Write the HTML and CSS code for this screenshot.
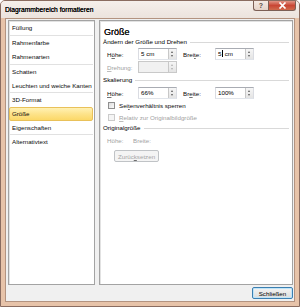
FILE: index.html
```html
<!DOCTYPE html>
<html lang="de">
<head>
<meta charset="utf-8">
<title>Diagrammbereich formatieren</title>
<link rel="stylesheet" href="styles.css">
</head>
<body>
<div class="window">
  <div class="titlebar">
    <span class="title">Diagrammbereich formatieren</span>
    <div class="caption">
      <div class="cbtn help">?</div>
      <div class="cbtn close"><svg width="9" height="7" viewBox="0 0 9 7"><path d="M1.5 0.5 L7.5 6.5 M7.5 0.5 L1.5 6.5" stroke="#fff" stroke-width="1.7" fill="none"/></svg></div>
    </div>
  </div>
  <div class="client">
    <div class="panes">
      <ul class="nav">
        <li class="item">Füllung</li>
        <li class="sep"></li>
        <li class="item">Rahmenfarbe</li>
        <li class="item">Rahmenarten</li>
        <li class="sep"></li>
        <li class="item">Schatten</li>
        <li class="item short">Leuchten und weiche Kanten</li>
        <li class="sep"></li>
        <li class="item">3D-Format</li>
        <li class="item selected">Größe</li>
        <li class="item short">Eigenschaften</li>
        <li class="sep"></li>
        <li class="item">Alternativtext</li>
      </ul>
      <div class="content">
        <h1 class="heading">Größe</h1>
        <div class="sec">Ändern der Größe und Drehen</div>
        <div class="row r1">
          <span class="lbl">H<u>ö</u>he:</span>
          <div class="field"><span class="val">5 cm</span><span class="spin"></span></div>
          <span class="lbl lbl2">Brei<u>t</u>e:</span>
          <div class="field"><span class="val">5<i class="caret"></i> cm</span><span class="spin"></span></div>
        </div>
        <div class="row r2 disabled">
          <span class="lbl"><u>D</u>rehung:</span>
          <div class="field off"><span class="val"></span><span class="spin"></span></div>
        </div>
        <div class="sec s2">Skalierung</div>
        <div class="row r3">
          <span class="lbl"><u>H</u>öhe:</span>
          <div class="field"><span class="val">66%</span><span class="spin"></span></div>
          <span class="lbl lbl2">Br<u>e</u>ite:</span>
          <div class="field"><span class="val">100%</span><span class="spin"></span></div>
        </div>
        <div class="check"><span class="box"></span><span>Sei<u>t</u>enverhältnis sperren</span></div>
        <div class="check disabled"><span class="box"></span><span><u>R</u>elativ zur Originalbildgröße</span></div>
        <div class="sec s3">Originalgröße</div>
        <div class="orig disabled">
          <span class="olbl">Höhe:</span>
          <span>Breite:</span>
        </div>
        <div class="btnrow"><span class="btn off">Zurüc<u>k</u>setzen</span></div>
      </div>
    </div>
    <div class="footer"><span class="btn primary">Schließen</span></div>
  </div>
</div>
</body>
</html>
```
FILE: styles.css
```css
html, body {
  margin: 0;
  padding: 0;
  background: #ffffff;
}
body {
  font-family: "Liberation Sans", Arial, sans-serif;
  font-size: 6.2px;
  color: #0a0a0a;
}
.window {
  width: 300px;
  height: 307px;
  box-sizing: border-box;
  border: 1px solid #8a6c60;
  border-radius: 5px 5px 0 0;
  background: #e7c3a9;
  display: flex;
  flex-direction: column;
  overflow: hidden;
}
.titlebar {
  height: 17px;
  flex: none;
  display: flex;
  justify-content: space-between;
  align-items: flex-start;
  background: linear-gradient(#f5efeb, #ece3dd);
}
.title {
  padding-left: 4px;
  line-height: 17px;
  font-size: 6.7px;
  color: #000;
  text-shadow: 0 0 0.3px #000;
}
.caption {
  display: flex;
  margin-top: -1px;
  margin-right: 3px;
}
.cbtn {
  height: 11px;
  box-sizing: border-box;
  border: 1px solid #7c5f55;
  border-top: none;
  display: flex;
  align-items: center;
  justify-content: center;
}
.help {
  width: 15px;
  border-right: none;
  border-radius: 0 0 0 3px;
  background: linear-gradient(#f6ece6, #e4d2c8);
  font-size: 7px;
  font-weight: bold;
  color: #5a4a44;
}
.close {
  width: 28px;
  border-radius: 0 0 3px 0;
  background: linear-gradient(#e6a697, #c94634 55%, #d06a4c);
}
.client {
  flex: 1;
  margin: 0 4px 4px 4px;
  border: 1px solid #b39380;
  background: #f0f0f0;
  display: flex;
  flex-direction: column;
}
.panes {
  height: 265px;
  margin-top: 1px;
  display: flex;
  gap: 4px;
  padding-left: 2px;
}
.nav {
  list-style: none;
  margin: 0;
  padding: 0;
  width: 87px;
  box-sizing: border-box;
  border: 1px solid #a3a3a3;
  box-shadow: inset 1px 1px 0 #e2e2e2;
  background: #fff;
}
.nav .item {
  height: 14px;
  line-height: 14px;
  padding-left: 3px;
  margin-right: 1px;
  white-space: nowrap;
}
.nav .item.short {
  height: 13px;
  line-height: 13px;
}
.nav .item.selected {
  box-sizing: border-box;
  border: 1px solid #e9c15a;
  border-radius: 2px;
  padding-left: 2px;
  line-height: 12px;
  background: linear-gradient(#fff1b4, #fde38a 50%, #fbd868);
}
.nav .sep {
  height: 1px;
  margin: 0 1px;
  background: #e1e1e1;
}
.content {
  width: 194px;
  box-sizing: border-box;
  border: 1px solid #a3a3a3;
  box-shadow: inset 1px 1px 0 #e2e2e2;
  background: #fff;
  padding: 5px 3px 0 3px;
  display: flex;
  flex-direction: column;
}
.heading {
  margin: 0;
  height: 12px;
  line-height: 12px;
  font-size: 9px;
  font-weight: normal;
  color: #111;
  padding-left: 1px;
  text-shadow: 0 0 0.3px #000;
}
.sec {
  height: 8px;
  line-height: 8px;
  display: flex;
  align-items: center;
  white-space: nowrap;
  color: #000;
}
.sec::after {
  content: "";
  flex: 1;
  margin-left: 3px;
  border-top: 1px solid #d9d9d9;
}
.s2 { margin-top: 3px; }
.s3 { margin-top: 1px; }
.row {
  height: 12px;
  display: flex;
  align-items: center;
  padding-left: 4px;
}
.r1 { margin-top: 2px; }
.r2 { margin-top: 1px; }
.r3 { margin-top: 3px; }
.lbl {
  width: 31px;
  flex: none;
}
.lbl2 {
  margin-left: 6px;
  width: 32px;
}
u {
  text-decoration: underline;
  text-decoration-color: rgba(0, 0, 0, 0.55);
  text-underline-offset: 0.5px;
}
.disabled {
  color: #a2a2a2;
}
.disabled u {
  text-decoration-color: #bdbdbd;
}
.field {
  width: 39px;
  height: 12px;
  box-sizing: border-box;
  border: 1px solid #b5b8bf;
  border-color: #a9acb3 #dadce2 #e0e4ea #dadce2;
  display: flex;
  background: #fff;
}
.field.off {
  background: #f1f1f1;
  border-color: #c9c9c9;
}
.val {
  flex: 1;
  padding-left: 2px;
  line-height: 10px;
  color: #000;
  white-space: nowrap;
}
.caret {
  display: inline-block;
  width: 1px;
  height: 7px;
  background: #000;
  vertical-align: -1px;
  margin-left: 0.5px;
}
.spin {
  width: 8px;
  flex: none;
  box-sizing: border-box;
  border-left: 1px solid #c8c8c8;
  background: linear-gradient(#f6f6f6, #e4e4e4);
  position: relative;
}
.spin::before,
.spin::after {
  content: "";
  position: absolute;
  left: 2px;
  border-left: 1.5px solid transparent;
  border-right: 1.5px solid transparent;
}
.spin::before {
  top: 2px;
  border-bottom: 2px solid #5a5a5a;
}
.spin::after {
  bottom: 2px;
  border-top: 2px solid #5a5a5a;
}
.field.off .spin::before { border-bottom-color: #b0b0b0; }
.field.off .spin::after { border-top-color: #b0b0b0; }
.check {
  height: 12px;
  display: flex;
  align-items: center;
  padding-left: 5px;
  white-space: nowrap;
}
.box {
  width: 7px;
  height: 7px;
  box-sizing: border-box;
  border: 1px solid #8f8f8f;
  background: linear-gradient(135deg, #dcdcdc, #fbfbfb);
  margin-right: 4px;
  flex: none;
}
.check.disabled .box {
  border-color: #cbcbcb;
  background: #f5f5f5;
}
.orig {
  height: 10px;
  margin-top: 3px;
  display: flex;
  align-items: center;
  padding-left: 4px;
}
.olbl {
  width: 26px;
}
.btnrow {
  margin-top: 5px;
  padding-left: 11px;
  display: flex;
}
.btn {
  height: 12px;
  box-sizing: border-box;
  border: 1px solid #707070;
  border-radius: 2px;
  display: flex;
  align-items: center;
  justify-content: center;
  background: linear-gradient(#f3f3f3, #e6e6e6 50%, #dddddd);
  color: #000;
}
.btn.off {
  width: 45px;
  border-color: #c0c3c6;
  background: #f4f4f4;
  color: #a6a6a6;
}
.footer {
  flex: 1;
  display: flex;
  justify-content: flex-end;
  align-items: flex-start;
  padding: 2px 1px 0 0;
}
.btn.primary {
  width: 41px;
  height: 12px;
  border-color: #3c7fb1;
  box-shadow: inset 0 0 0 1px #bfe4f8;
  background: linear-gradient(#f4f4f4, #e8e8e8 50%, #dcdcdc);
}
```
